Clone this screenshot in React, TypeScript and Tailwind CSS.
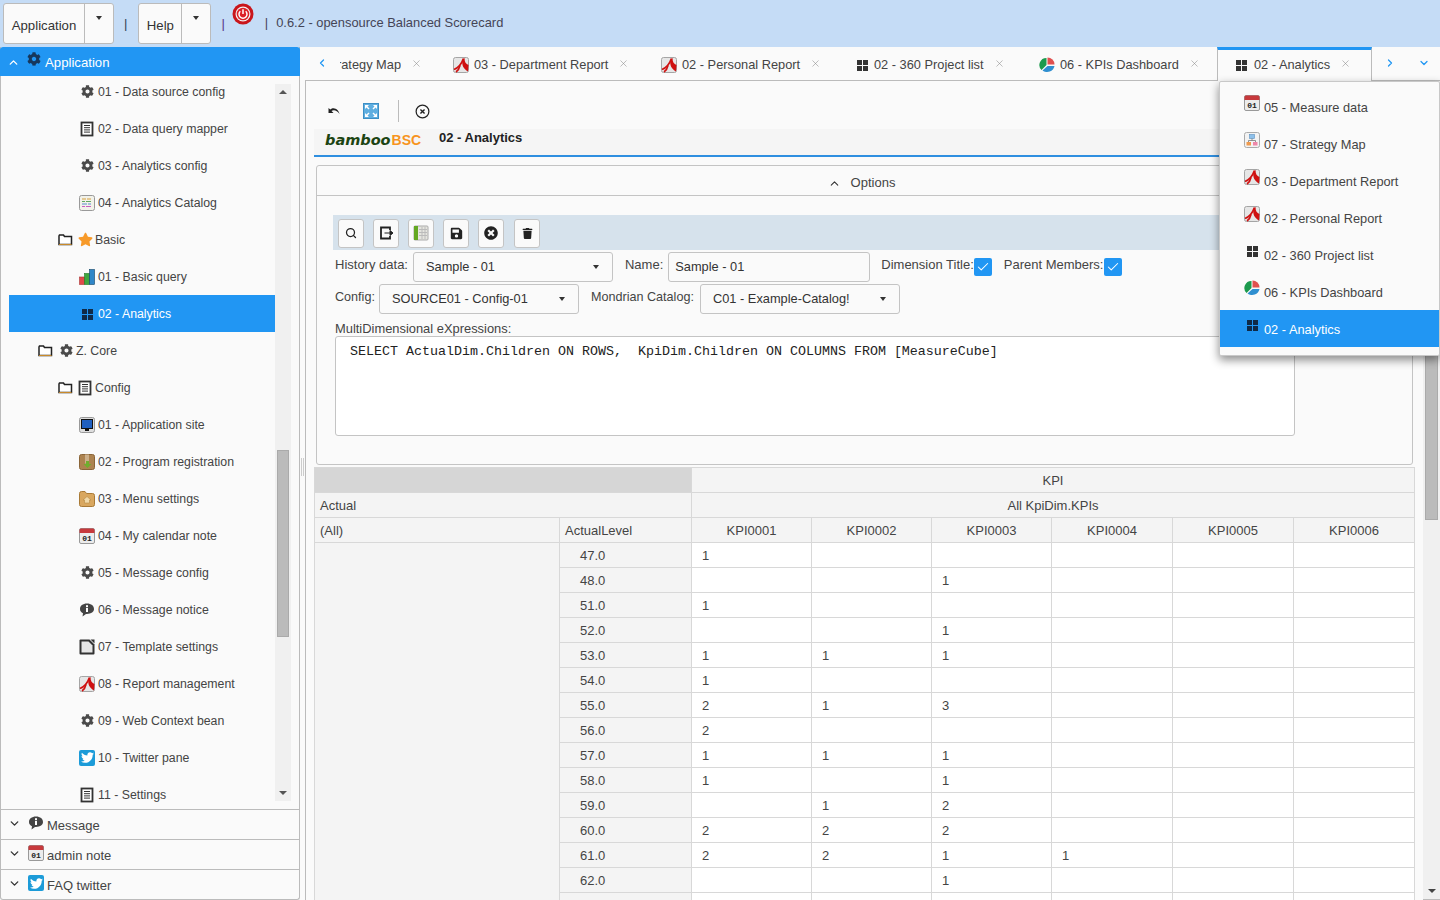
import React from "react";
import { FaCog, FaTwitter, FaStar, FaSave, FaTrash, FaTimesCircle } from "react-icons/fa";
import { ChevronDown, ChevronLeft, ChevronRight, ChevronUp, Check, Search, X } from "lucide-react";

type IconProps = { className?: string };

const Gear = ({ className = "" }: IconProps) => (
  <span className={"inline-flex w-4 h-4 items-center justify-center text-[#4a4a4a] " + className}>
    <FaCog size={13} />
  </span>
);

const GridIcon = ({ color = "#333", className = "" }: { color?: string; className?: string }) => (
  <svg viewBox="0 0 16 16" className={"w-4 h-4 " + className}>
    <rect x="3" y="3" width="5" height="5" fill={color} />
    <rect x="9" y="3" width="5" height="5" fill={color} />
    <rect x="3" y="9" width="5" height="5" fill={color} />
    <rect x="9" y="9" width="5" height="5" fill={color} />
  </svg>
);

const Pdf = ({ className = "" }: IconProps) => (
  <svg viewBox="0 0 16 16" className={"w-4 h-4 " + className}>
    <rect x="0.5" y="0.5" width="15" height="15" rx="2" fill="#e6e6e6" stroke="#a5a5a5" />
    <path d="M1 12.500C5 11 8.500 7 10.500 1.500" fill="none" stroke="#cf1111" strokeWidth="1.800" />
    <path d="M9.500 3C8.500 8 10.500 12 15 14.500L15.500 8C13 7 11.500 5 11.500 1Z" fill="#cf1111" />
    <path d="M7 8.500C6.500 11 5 13.500 3 15" fill="none" stroke="#cf1111" strokeWidth="1.600" />
  </svg>
);

const ListDoc = ({ className = "" }: IconProps) => (
  <svg viewBox="0 0 16 16" className={"w-4 h-4 " + className}>
    <rect x="2.5" y="1.5" width="11" height="13" fill="#fff" stroke="#333" strokeWidth="1.800" />
    <path d="M5 4.500h6M5 6.700h6M5 8.900h6M5 11.100h6" stroke="#333" strokeWidth="1" />
  </svg>
);

const Catalog = () => (
  <svg viewBox="0 0 16 16" className="w-4 h-4">
    <rect x="0.5" y="0.5" width="15" height="15" rx="2" fill="#f2f2ea" stroke="#999" />
    <path d="M3 4h4M8 4h4" stroke="#d7a03c" />
    <path d="M3 6.500h3M7 6.500h5" stroke="#62a860" />
    <path d="M3 9h5M9 9h3" stroke="#5c8fcb" />
    <path d="M3 11.500h3M7 11.500h5" stroke="#c85fc0" />
  </svg>
);

const Folder = () => (
  <svg viewBox="0 0 15 13" className="w-[15px] h-[13px]">
    <path d="M1 3V11.500H13.500V3.500H6.500L5.500 2H1.500Z" fill="#fff" stroke="#222" strokeWidth="1.500" />
    <path d="M1 11.500H13.500" stroke="#c98a2a" strokeWidth="1" />
  </svg>
);

const Bars = () => (
  <svg viewBox="0 0 16 16" className="w-4 h-4">
    <rect x="0.5" y="8" width="5" height="7.500" fill="#e04a4a" stroke="#a33" strokeWidth="0.600" />
    <rect x="5.500" y="4.500" width="5" height="11" fill="#3fa63f" stroke="#272" strokeWidth="0.600" />
    <rect x="10.500" y="0.5" width="5" height="15" fill="#2f86c8" stroke="#146" strokeWidth="0.600" />
  </svg>
);

const Monitor = () => (
  <svg viewBox="0 0 16 16" className="w-4 h-4">
    <rect x="0.5" y="0.5" width="15" height="15" rx="2" fill="#ddd" stroke="#999" />
    <rect x="2.500" y="2.500" width="11" height="9" fill="#1f5fc0" stroke="#111" />
    <rect x="6" y="12" width="4" height="2" fill="#111" />
  </svg>
);

const Box = () => (
  <svg viewBox="0 0 16 16" className="w-4 h-4">
    <rect x="0.5" y="0.5" width="15" height="15" rx="2" fill="#ad8350" stroke="#8a6538" />
    <rect x="6" y="0.5" width="4" height="9" fill="#cdb08a" />
    <path d="M7 7h3v3h2.500l-4 4-4-4H7Z" fill="#6fae2e" />
  </svg>
);

const HomeFolder = () => (
  <svg viewBox="0 0 16 16" className="w-4 h-4">
    <path d="M0.500 2.500Q0.500 0.500 2.500 0.500H6L7.500 2.500H13.500Q15.500 2.500 15.500 4.500V13.500Q15.500 15.500 13.500 15.500H2.500Q0.500 15.500 0.500 13.500Z" fill="#d9a75f" stroke="#a97a36" />
    <path d="M8 5.500 12 9H10.500V12H5.500V9H4Z" fill="#f1d9a9" stroke="#b58a45" strokeWidth="0.600" />
  </svg>
);

const Calendar = () => (
  <svg viewBox="0 0 16 16" className="w-4 h-4">
    <rect x="0.5" y="0.5" width="15" height="15" rx="1.500" fill="#ececec" stroke="#999" />
    <path d="M0.500 5V2Q0.500 0.500 2 0.500H14Q15.500 0.500 15.500 2V5Z" fill="#c7393c" />
    <text x="8" y="13" textAnchor="middle" fontSize="8" fontWeight="700" fontFamily="Liberation Mono, monospace" fill="#222">01</text>
  </svg>
);

const Info = ({ className = "" }: IconProps) => (
  <svg viewBox="0 0 16 16" className={"w-4 h-4 " + className}>
    <path d="M8 1.500C3.800 1.500 1 3.800 1 7C1 9 2.200 10.500 4 11.300L3.500 14.500L7 11.900C12 12.200 15 10 15 7C15 3.800 12.200 1.500 8 1.500Z" fill="#444" />
    <rect x="7" y="3.200" width="2" height="2" fill="#fff" />
    <rect x="7" y="6" width="2" height="4" fill="#fff" />
  </svg>
);

const TemplateIcon = () => (
  <svg viewBox="0 0 16 16" className="w-4 h-4">
    <path d="M1.500 0.500H10.500L15.500 5.500V14.500Q15.500 15.500 14.500 15.500H1.500Q0.500 15.500 0.500 14.500V1.500Q0.500 0.500 1.500 0.500Z" fill="#333" />
    <path d="M2.500 2.500H9.500L13.500 6.500V13.500H2.500Z" fill="#e6e6e6" />
    <path d="M11.500 0.500H15.500V4.500Z" fill="#333" />
  </svg>
);

const Twitter = () => (
  <span className="inline-flex w-4 h-4 items-center justify-center rounded-[2px] bg-[#1c9bd8] text-white">
    <FaTwitter size={13} />
  </span>
);

const Pie = ({ className = "" }: IconProps) => (
  <svg viewBox="0 0 16 16" className={"w-4 h-4 " + className}>
    <path d="M7.500 1A7 7 0 0 0 2.500 13L7.500 8Z" fill="#1c9a4d" />
    <path d="M8.500 0.500A7 7 0 0 1 15.500 7.500H8.500Z" fill="#e0504f" />
    <path d="M3.500 13.500A7.500 7.500 0 0 0 15.500 9H8.500Z" fill="#2f8fd0" />
  </svg>
);

const StrategyIcon = () => (
  <svg viewBox="0 0 16 16" className="w-4 h-4">
    <rect x="0.5" y="0.5" width="15" height="15" rx="2" fill="#f2f2f2" stroke="#aaa" />
    <rect x="5.500" y="2.500" width="5" height="4" fill="#8dc0ea" stroke="#5a8fc0" strokeWidth="0.600" />
    <path d="M8 6.500V8.500M4.500 10V8.500H11.500V10" stroke="#777" fill="none" strokeWidth="0.800" />
    <rect x="2.500" y="10" width="4.500" height="3.500" fill="#ef9a4d" />
    <rect x="9" y="10" width="4.500" height="3.500" fill="#ef86a8" />
  </svg>
);

const PowerIcon = () => (
  <svg viewBox="0 0 22 22" className="w-[22px] h-[22px]">
    <circle cx="11" cy="11" r="10.500" fill="#c9151b" />
    <circle cx="11" cy="11" r="7.500" fill="#f2f2f2" />
    <circle cx="11" cy="11" r="6.300" fill="#dc2128" />
    <path d="M8.300 8.300A4 4 0 1 0 13.700 8.300" stroke="#fff" strokeWidth="1.500" fill="none" />
    <path d="M11 6.300V11" stroke="#fff" strokeWidth="1.500" />
  </svg>
);

const TriDown = () => (
  <span className="inline-block w-0 h-0 border-x-[3.5px] border-x-transparent border-t-[4px] border-t-[#333]" />
);

type TreeRow = { label: string; pad: number; icons: React.ReactNode; gap?: boolean; active?: boolean };

const treeRows: TreeRow[] = [
  { label: "01 - Data source config", pad: 70, icons: <Gear /> },
  { label: "02 - Data query mapper", pad: 70, icons: <ListDoc /> },
  { label: "03 - Analytics config", pad: 70, icons: <Gear /> },
  { label: "04 - Analytics Catalog", pad: 70, icons: <Catalog /> },
  {
    label: "Basic",
    pad: 49,
    gap: true,
    icons: (
      <>
        <Folder />
        <FaStar size={15} color="#f79a2a" className="ml-[5px]" />
      </>
    ),
  },
  { label: "01 - Basic query", pad: 70, icons: <Bars /> },
  { label: "02 - Analytics", pad: 70, icons: <GridIcon color="#0f2a47" />, active: true },
  {
    label: "Z. Core",
    pad: 29,
    gap: true,
    icons: (
      <>
        <Folder />
        <Gear className="ml-[5px]" />
      </>
    ),
  },
  {
    label: "Config",
    pad: 49,
    gap: true,
    icons: (
      <>
        <Folder />
        <ListDoc className="ml-[4px]" />
      </>
    ),
  },
  { label: "01 - Application site", pad: 70, icons: <Monitor /> },
  { label: "02 - Program registration", pad: 70, icons: <Box /> },
  { label: "03 - Menu settings", pad: 70, icons: <HomeFolder /> },
  { label: "04 - My calendar note", pad: 70, icons: <Calendar /> },
  { label: "05 - Message config", pad: 70, icons: <Gear /> },
  { label: "06 - Message notice", pad: 70, icons: <Info /> },
  { label: "07 - Template settings", pad: 70, icons: <TemplateIcon /> },
  { label: "08 - Report management", pad: 70, icons: <Pdf /> },
  { label: "09 - Web Context bean", pad: 70, icons: <Gear /> },
  { label: "10 - Twitter pane", pad: 70, icons: <Twitter /> },
  { label: "11 - Settings", pad: 70, icons: <ListDoc /> },
];

const tabs = [
  { label: "03 - Department Report", icon: <Pdf className="mr-[5px] mt-[2px]" />, width: "w-[208px]" },
  { label: "02 - Personal Report", icon: <Pdf className="mr-[5px] mt-[2px]" />, width: "w-[196px]" },
  { label: "02 - 360 Project list", icon: <GridIcon className="mr-[4px] -ml-[3px] mt-[2px]" />, width: "w-[182px]" },
  { label: "06 - KPIs Dashboard", icon: <Pie className="mr-[5px] mt-[2px]" />, width: "w-[197px]" },
];

const menuItems = [
  { label: "05 - Measure data", icon: <Calendar /> },
  { label: "07 - Strategy Map", icon: <StrategyIcon /> },
  { label: "03 - Department Report", icon: <Pdf /> },
  { label: "02 - Personal Report", icon: <Pdf /> },
  { label: "02 - 360 Project list", icon: <GridIcon /> },
  { label: "06 - KPIs Dashboard", icon: <Pie /> },
  { label: "02 - Analytics", icon: <GridIcon color="#0f2a47" />, active: true },
];

const kpiRows: [string, string, string, string, string][] = [
  ["47.0", "1", "", "", ""],
  ["48.0", "", "", "1", ""],
  ["51.0", "1", "", "", ""],
  ["52.0", "", "", "1", ""],
  ["53.0", "1", "1", "1", ""],
  ["54.0", "1", "", "", ""],
  ["55.0", "2", "1", "3", ""],
  ["56.0", "2", "", "", ""],
  ["57.0", "1", "1", "1", ""],
  ["58.0", "1", "", "1", ""],
  ["59.0", "", "1", "2", ""],
  ["60.0", "2", "2", "2", ""],
  ["61.0", "2", "2", "1", "1"],
  ["62.0", "", "", "1", ""],
  ["", "", "", "", ""],
];

const cell = "border border-[#d8d8d8] px-[5px] pt-px h-[25px] font-normal text-[13px] text-[#444]";

const TopButton = ({ label, w }: { label: string; w: string }) => (
  <div className="flex h-[41px] bg-[#fafafa] border border-[#bbb] rounded-[3px]">
    <div className={"flex items-end pb-[7px] justify-center border-r border-[#bbb] text-[13.2px] text-[#333] " + w}>{label}</div>
    <div className="w-[28px] flex justify-center pt-[12px]">
      <TriDown />
    </div>
  </div>
);

const ToolButton = ({ children, className = "" }: { children: React.ReactNode; className?: string }) => (
  <div className={"w-[26px] h-[29px] flex items-center justify-center bg-[#fafafa] border border-[#c4c4c4] rounded-[3px] text-[#222] " + className}>
    {children}
  </div>
);

const SelectBox = ({ value }: { value: string }) => (
  <div className="w-[200px] h-[30px] flex items-center justify-between bg-[#fafafa] border border-[#c4c4c4] rounded-[3px] pl-[12px] pr-[13px] text-[12.8px] text-[#333]">
    <span>{value}</span>
    <TriDown />
  </div>
);

const Tick = () => (
  <span className="w-[18px] h-[18px] bg-[#2196f3] rounded-[2px] flex items-center justify-center text-white">
    <Check size={14} strokeWidth={1.8} />
  </span>
);

const AccordionRow = ({ label, icon }: { label: string; icon: React.ReactNode }) => (
  <div className="h-[30px] flex items-start border-t border-[#bbb] text-[13px] text-[#444]">
    <ChevronDown size={13} strokeWidth={2.5} className="ml-[7px] mt-[7px] text-[#333]" />
    <span className="ml-[7px] mt-[5px]">{icon}</span>
    <span className="ml-[3px] mt-[6px]">{label}</span>
  </div>
);

export default function App() {
  return (
    <div className="h-screen w-[1440px] overflow-hidden bg-[#fafafa] font-['Liberation_Sans',Arial,sans-serif]">
      <header className="h-[47px] bg-[#c5dcf6] flex items-start pt-[3px] pl-[3px] text-[#333]">
        <TopButton label="Application" w="w-[81px]" />
        <span className="ml-[10px] mt-[11px] text-[13px] text-[#345]">|</span>
        <div className="ml-[11px]">
          <TopButton label="Help" w="w-[43px]" />
        </div>
        <span className="ml-[10px] mt-[11px] text-[13px] text-[#538]">|</span>
        <span className="ml-[7px]">
          <PowerIcon />
        </span>
        <span className="ml-[11px] mt-[10px] text-[12.9px] text-[#445]">|</span>
        <span className="ml-[8px] mt-[10px] text-[12.9px] text-[#445]">0.6.2 - opensource Balanced Scorecard</span>
      </header>

      <div className="flex h-[853px]">
        <aside className="w-[300px] h-full flex flex-col border-x border-b border-[#bbb] rounded-b-[3px]">
          <div className="-mx-px h-[29px] shrink-0 bg-[#2196f3] rounded-t-[3px] flex items-start text-white text-[13.2px]">
            <ChevronUp size={13} strokeWidth={2.5} className="ml-[7px] mt-[9px]" />
            <span className="ml-[7px] mt-[5px]">
              <FaCog size={14} color="#16375c" />
            </span>
            <span className="ml-[4px] mt-[6px]">Application</span>
          </div>
          <div className="h-[733px] shrink-0 flex overflow-hidden pl-[8px]">
            <div className="w-[266px] -mt-[3px] h-[736px] overflow-hidden shrink-0">
              {treeRows.map((r) => (
                <div
                  key={r.label}
                  style={{ paddingLeft: r.pad }}
                  className={"h-[37px] flex items-center text-[12.3px] " + (r.active ? "bg-[#2196f3] text-white" : "text-[#444]")}
                >
                  <span className="flex items-center">{r.icons}</span>
                  <span className={r.gap ? "ml-[2px] mt-px" : "ml-[3px] mt-px"}>{r.label}</span>
                </div>
              ))}
            </div>
            <div className="w-[16px] mt-[8px] h-[717px] bg-[#f0f0f0] flex flex-col items-center">
              <span className="mt-[6px] w-0 h-0 border-x-[4px] border-x-transparent border-b-[4px] border-b-[#555]" />
              <div className="mt-[356px] w-[12px] h-[187px] bg-[#bbb] border border-[#aaa]" />
              <span className="mt-auto mb-[6px] w-0 h-0 border-x-[4px] border-x-transparent border-t-[4px] border-t-[#555]" />
            </div>
          </div>
          <AccordionRow label="Message" icon={<Info />} />
          <AccordionRow label="admin note" icon={<Calendar />} />
          <AccordionRow label="FAQ twitter" icon={<Twitter />} />
        </aside>

        <div className="w-[5px] flex items-center justify-center">
          <span className="h-[18px] w-[3px] -mt-[13px] border-x border-[#ccc]" />
        </div>

        <main className="relative flex-1 flex flex-col min-w-0">
          {/* tab strip */}
          <div className="h-[34px] shrink-0 flex items-stretch border-b border-[#bbb] text-[12.8px] text-[#444]">
            <div className="w-[33px] flex justify-center pt-[10px]">
              <ChevronLeft size={12} strokeWidth={2.5} className="text-[#2196f3]" />
            </div>
            <div className="w-[96px] flex items-start pt-[8px] overflow-hidden">
              <div className="flex w-[61px] ml-[2px] justify-end overflow-hidden whitespace-nowrap">Strategy Map</div>
              <X size={11} strokeWidth={1.2} className="ml-[10px] mt-[3px] text-[#888]" />
            </div>
            {tabs.map((t) => (
              <div key={t.label} className={"flex items-start pl-[19px] pt-[8px] whitespace-nowrap " + t.width}>
                {t.icon}
                <span>{t.label}</span>
                <X size={11} strokeWidth={1.2} className="ml-[10px] mt-[3px] text-[#888]" />
              </div>
            ))}
            <div className="w-[155px] -mb-px bg-[#fafafa] border-x border-b-0 border-[#bbb] border-t-[3px] border-t-[#2196f3] flex items-start pl-[15px] pt-[5px] whitespace-nowrap">
              <GridIcon className="mr-[5px] mt-[2px]" />
              <span>02 - Analytics</span>
              <X size={11} strokeWidth={1.2} className="ml-[10px] mt-[3px] text-[#888]" />
            </div>
            <div className="w-[35px] flex justify-center pt-[10px]">
              <ChevronRight size={12} strokeWidth={2.5} className="text-[#2196f3]" />
            </div>
            <div className="flex-1 flex justify-center pt-[10px]">
              <ChevronDown size={12} strokeWidth={2.5} className="text-[#2196f3]" />
            </div>
          </div>

          <div className="flex-1 min-h-0 flex border-l border-[#bbb]">
            <div className="flex-1 min-w-0 overflow-hidden">
              {/* page tools */}
              <div className="h-[48px] flex items-center pl-[20px] pt-[12px]">
                <svg viewBox="0 0 16 16" className="w-4 h-4">
                  <path d="M2.500 5V10H7.500L5.500 8C7.500 6.500 11 7 13.500 11C13 7 8 3 4.300 6.500Z" fill="#222" />
                </svg>
                <svg viewBox="0 0 16 16" className="w-4 h-4 ml-[21px]">
                  <rect x="0.5" y="0.5" width="15" height="15" fill="#5faee0" stroke="#3d8fc5" />
                  <path d="M2 2h4L4.500 3.500 6.500 5.500 5.500 6.500 3.500 4.500 2 6ZM14 2v4L12.500 4.500 10.500 6.500 9.500 5.500 11.500 3.500 10 2ZM2 14v-4L3.500 11.500 5.500 9.500 6.500 10.500 4.500 12.500 6 14ZM14 14h-4L11.500 12.500 9.500 10.500 10.500 9.500 12.500 11.500 14 10Z" fill="#fff" />
                </svg>
                <span className="w-px h-[22px] bg-[#bbb] ml-[19px]" />
                <svg viewBox="0 0 16 16" className="w-[15px] h-[15px] ml-[16px]">
                  <circle cx="8" cy="8" r="6.800" fill="none" stroke="#222" strokeWidth="1.300" />
                  <path d="M5.800 5.800 10.200 10.200M10.200 5.800 5.800 10.200" stroke="#222" strokeWidth="1.500" />
                </svg>
              </div>

              {/* logo bar */}
              <div className="ml-[8px] h-[28px] bg-[#f5f5f5] border-b-2 border-[#2f8fe0] flex items-start pl-[11px]">
                <span className="mt-px w-[114px] whitespace-nowrap font-['DejaVu_Sans',sans-serif] font-bold italic text-[14.5px] text-[#1c4412]">
                  bamboo<span className="not-italic font-['Liberation_Sans',sans-serif] text-[14px] text-[#f7941d] ml-px">BSC</span>
                </span>
                <span className="-mt-px text-[13px] font-bold text-[#222]">02 - Analytics</span>
              </div>

              {/* options panel */}
              <div className="ml-[10px] mr-[10px] mt-[8px] h-[300px] border border-[#c4c4c4] rounded-[3px] overflow-hidden text-[#444] text-[13px]">
                <div className="h-[30px] border-b border-[#c4c4c4] flex items-center justify-center pr-[6px] pt-[5px] text-[13px]">
                  <ChevronUp size={13} strokeWidth={2} className="mr-[10px] text-[#333]" />
                  Options
                </div>
                <div className="pl-[16px] pr-[2px] pt-[19px]">
                  <div className="h-[35px] bg-[#d6e2ec] flex items-center pl-[5px] pt-px gap-[9px]">
                    <ToolButton>
                      <Search size={12} strokeWidth={2.5} />
                    </ToolButton>
                    <ToolButton>
                      <svg viewBox="0 0 16 16" className="w-4 h-4">
                        <path d="M12 5V2.500H3V13.500H12V11" fill="none" stroke="#222" strokeWidth="1.800" />
                        <path d="M6.500 8H12V5.500L15 8 12 10.500V8" fill="#222" stroke="#222" />
                      </svg>
                    </ToolButton>
                    <ToolButton>
                      <svg viewBox="0 0 16 16" className="w-4 h-4">
                        <rect x="1" y="1" width="14" height="14" rx="1" fill="#e5e5df" stroke="#aaa" />
                        <rect x="1" y="1" width="4" height="14" fill="#63a821" />
                        <path d="M6 4.500h8M6 7.500h8M6 10.500h8M9 2v12M12 2v12" stroke="#bbb" />
                      </svg>
                    </ToolButton>
                    <ToolButton>
                      <FaSave size={13} />
                    </ToolButton>
                    <ToolButton>
                      <FaTimesCircle size={14} />
                    </ToolButton>
                    <ToolButton className="ml-px">
                      <FaTrash size={11} />
                    </ToolButton>
                  </div>

                  <div className="flex items-start mt-[2px] ml-[2px] h-[32px]">
                    <span className="mt-[3px] mr-[5px]">History data:</span>
                    <SelectBox value="Sample - 01" />
                    <span className="ml-[12px] mt-[3px] mr-[5px]">Name:</span>
                    <div className="w-[202px] h-[30px] flex items-center pl-[6px] border border-[#c4c4c4] rounded-[3px] text-[12.8px] text-[#333]">Sample - 01</div>
                    <span className="ml-[11px] mt-[3px]">Dimension Title:</span>
                    <span className="mt-[6px]">
                      <Tick />
                    </span>
                    <span className="ml-[12px] mt-[3px] mr-px">Parent Members:</span>
                    <span className="mt-[6px]">
                      <Tick />
                    </span>
                  </div>
                  <div className="flex items-start ml-[2px] h-[30px] text-[12.6px]">
                    <span className="mt-[4px] w-[44px]">Config:</span>
                    <SelectBox value="SOURCE01 - Config-01" />
                    <span className="ml-[12px] mt-[4px] w-[109px]">Mondrian Catalog:</span>
                    <SelectBox value="C01 - Example-Catalog!" />
                  </div>
                  <div className="ml-[2px] mt-[7px] h-[15px] leading-[15px] text-[12.9px]">MultiDimensional eXpressions:</div>
                  <div className="ml-[2px] w-[960px] h-[100px] bg-white border border-[#c4c4c4] rounded-[3px] pl-[14px] pt-[7px] font-['Liberation_Mono',monospace] text-[13.33px] leading-[15px] text-[#222] whitespace-pre">
                    SELECT ActualDim.Children ON ROWS,  KpiDim.Children ON COLUMNS FROM [MeasureCube]
                  </div>
                </div>
              </div>

              {/* pivot table */}
              <table className="ml-[8px] mt-[2px] w-[1100px] table-fixed border-collapse bg-white">
                <colgroup>
                  <col className="w-[245px]" />
                  <col className="w-[132px]" />
                  <col className="w-[120px]" />
                  <col className="w-[120px]" />
                  <col className="w-[120px]" />
                  <col className="w-[121px]" />
                  <col className="w-[121px]" />
                  <col className="w-[121px]" />
                </colgroup>
                <tbody>
                  <tr>
                    <td colSpan={2} className={cell + " bg-[#d6d6d6]"} />
                    <td colSpan={6} className={cell + " bg-[#f4f4f4] text-center"}>KPI</td>
                  </tr>
                  <tr>
                    <td colSpan={2} className={cell + " bg-[#f4f4f4]"}>Actual</td>
                    <td colSpan={6} className={cell + " bg-[#f4f4f4] text-center"}>All KpiDim.KPIs</td>
                  </tr>
                  <tr>
                    <td className={cell + " bg-[#f4f4f4]"}>(All)</td>
                    <td className={cell + " bg-[#f4f4f4]"}>ActualLevel</td>
                    {["KPI0001", "KPI0002", "KPI0003", "KPI0004", "KPI0005", "KPI0006"].map((k) => (
                      <td key={k} className={cell + " bg-[#f4f4f4] text-center"}>{k}</td>
                    ))}
                  </tr>
                  {kpiRows.map((row, i) => (
                    <tr key={i}>
                      {i === 0 && <td rowSpan={kpiRows.length} className={cell + " bg-[#f4f4f4]"} />}
                      <td className={cell + " bg-[#f4f4f4] pl-[20px]"}>{row[0]}</td>
                      {row.slice(1).map((v, j) => (
                        <td key={j} className={cell + " pl-[10px]"}>{v}</td>
                      ))}
                      <td className={cell} />
                      <td className={cell} />
                    </tr>
                  ))}
                </tbody>
              </table>
            </div>

            {/* page scrollbar */}
            <div className="w-[17px] shrink-0 bg-[#f0f0f0] flex flex-col items-center border-b border-[#bbb]">
              <div className="mt-[20px] w-[13px] h-[419px] bg-[#bbb] border border-[#aaa]" />
              <span className="mt-auto mb-[6px] w-0 h-0 border-x-[4px] border-x-transparent border-t-[4px] border-t-[#444]" />
            </div>
          </div>

          {/* open tab list */}
          <div className="absolute left-[914px] top-[34px] w-[221px] h-[275px] bg-[#fafafa] border border-[#c8c8c8] rounded-[2px] shadow-[0_4px_10px_rgba(0,0,0,0.45)] pt-[6px]">
            {menuItems.map((m) => (
              <div
                key={m.label}
                className={"h-[37px] flex items-start pl-[24px] text-[12.8px] " + (m.active ? "bg-[#2196f3] text-white" : "text-[#444]")}
              >
                <span className="mt-[7px]">{m.icon}</span>
                <span className="ml-[4px] mt-[10px]">{m.label}</span>
              </div>
            ))}
          </div>
        </main>
      </div>
    </div>
  );
}
